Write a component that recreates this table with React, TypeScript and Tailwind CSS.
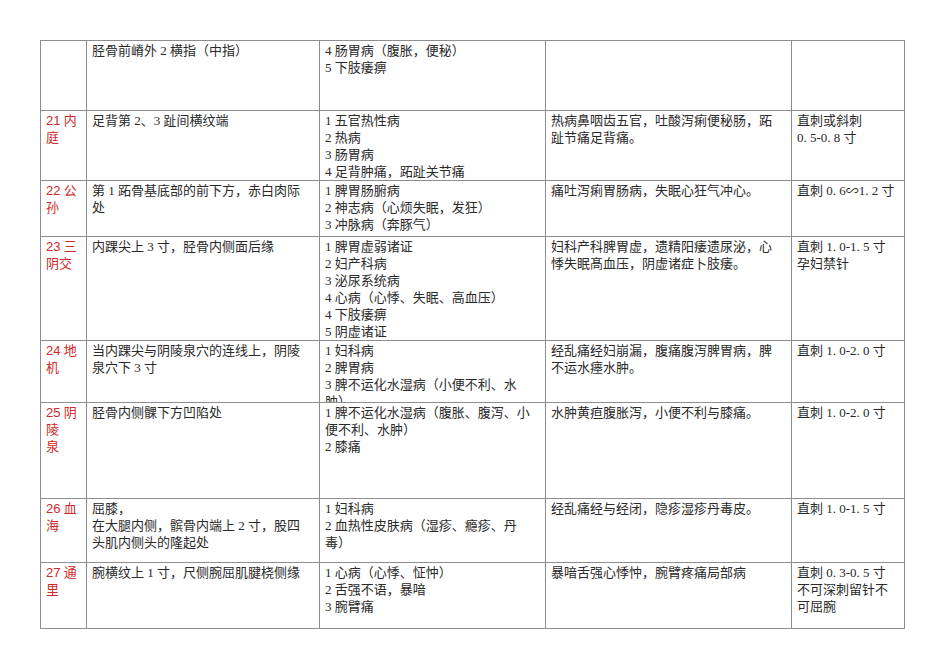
import React from "react";

type Row = {
  h: string;
  c1: string[];
  c2: string[];
  c3: string[];
  c4: string[];
  c5: string[];
};

const rows: Row[] = [
  {
    h: "h-[70px]",
    c1: [],
    c2: ["胫骨前嵴外 2 横指（中指）"],
    c3: ["4 肠胃病（腹胀，便秘）", "5 下肢痿痹"],
    c4: [],
    c5: [],
  },
  {
    h: "h-[70px]",
    c1: ["21 内", "庭"],
    c2: ["足背第 2、3 趾间横纹端"],
    c3: ["1 五官热性病", "2 热病", "3 肠胃病", "4 足背肿痛，跖趾关节痛"],
    c4: ["热病鼻咽齿五官，吐酸泻痢便秘肠，跖", "趾节痛足背痛。"],
    c5: ["直刺或斜刺", "0. 5-0. 8 寸"],
  },
  {
    h: "h-[56px]",
    c1: ["22 公", "孙"],
    c2: ["第 1 跖骨基底部的前下方，赤白肉际", "处"],
    c3: ["1 脾胃肠腑病", "2 神志病（心烦失眠，发狂）", "3 冲脉病（奔豚气）"],
    c4: ["痛吐泻痢胃肠病，失眠心狂气冲心。"],
    c5: ["直刺 0. 6∽1. 2 寸"],
  },
  {
    h: "h-[104px]",
    c1: ["23 三", "阴交"],
    c2: ["内踝尖上 3 寸，胫骨内侧面后缘"],
    c3: [
      "1 脾胃虚弱诸证",
      "2 妇产科病",
      "3 泌尿系统病",
      "4 心病（心悸、失眠、高血压）",
      "4 下肢痿痹",
      "5 阴虚诸证",
    ],
    c4: ["妇科产科脾胃虚，遗精阳痿遗尿泌，心", "悸失眠髙血压，阴虚诸症卜肢痿。"],
    c5: ["直刺 1. 0-1. 5 寸", "孕妇禁针"],
  },
  {
    h: "h-[62px]",
    c1: ["24 地", "机"],
    c2: ["当内踝尖与阴陵泉穴的连线上，阴陵", "泉穴下 3 寸"],
    c3: ["1 妇科病", "2 脾胃病", "3 脾不运化水湿病（小便不利、水", "肿）"],
    c4: ["经乱痛经妇崩漏，腹痛腹泻脾胃病，脾", "不运水瘗水肿。"],
    c5: ["直刺 1. 0-2. 0 寸"],
  },
  {
    h: "h-[96px]",
    c1: ["25 阴", "陵", "泉"],
    c2: ["胫骨内侧髁下方凹陷处"],
    c3: ["1 脾不运化水湿病（腹胀、腹泻、小", "便不利、水肿）", "2 膝痛"],
    c4: ["水肿黄疸腹胀泻，小便不利与膝痛。"],
    c5: ["直刺 1. 0-2. 0 寸"],
  },
  {
    h: "h-[64px]",
    c1: ["26 血", "海"],
    c2: ["屈膝，", "在大腿内侧，髌骨内端上 2 寸，股四", "头肌内侧头的隆起处"],
    c3: ["1 妇科病", "2 血热性皮肤病（湿疹、瘾疹、丹", "毒）"],
    c4: ["经乱痛经与经闭，隐疹湿疹丹毒皮。"],
    c5: ["直刺 1. 0-1. 5 寸"],
  },
  {
    h: "h-[66px]",
    c1: ["27 通", "里"],
    c2: ["腕横纹上 1 寸，尺侧腕屈肌腱桡侧缘"],
    c3: ["1 心病（心悸、怔忡）", "2 舌强不语，暴喑", "3 腕臂痛"],
    c4: ["暴喑舌强心悸忡，腕臂疼痛局部病"],
    c5: ["直刺 0. 3-0. 5 寸", "不可深刺留针不", "可屈腕"],
  },
];

function Lines({ lines }: { lines: string[] }) {
  return (
    <>
      {lines.map((l, i) => (
        <div key={i} className="whitespace-nowrap">
          {l}
        </div>
      ))}
    </>
  );
}

function NameCell({ lines }: { lines: string[] }) {
  return (
    <>
      {lines.map((l, i) => {
        const m = l.match(/^(\d+)\s(.*)$/);
        if (m) {
          return (
            <div key={i} className="whitespace-nowrap">
              <span className="font-['Liberation_Sans',sans-serif]">{m[1]}</span> {m[2]}
            </div>
          );
        }
        return (
          <div key={i} className="whitespace-nowrap">
            {l}
          </div>
        );
      })}
    </>
  );
}

export default function App() {
  const cell = "border-r border-b border-[#8e8e8e] overflow-hidden pt-[1px] pl-[5px]";
  return (
    <div className="min-h-[672px] w-[950px] bg-white pt-[40px] pl-[40px]">
      <div className="w-[865px] border-l border-t border-[#8e8e8e] text-[13px] leading-[17px] text-[#2a2a2a] font-['Liberation_Serif','Noto_Sans_CJK_SC',serif]">
        {rows.map((r, i) => (
          <div key={i} className={`grid grid-cols-[46px_233px_226px_246px_113px] ${r.h}`}>
            <div className={`${cell} pl-[3px] text-[#d02a2a]`}>
              <NameCell lines={r.c1} />
            </div>
            <div className={cell}>
              <Lines lines={r.c2} />
            </div>
            <div className={cell}>
              <Lines lines={r.c3} />
            </div>
            <div className={cell}>
              <Lines lines={r.c4} />
            </div>
            <div className={cell}>
              <Lines lines={r.c5} />
            </div>
          </div>
        ))}
      </div>
    </div>
  );
}
